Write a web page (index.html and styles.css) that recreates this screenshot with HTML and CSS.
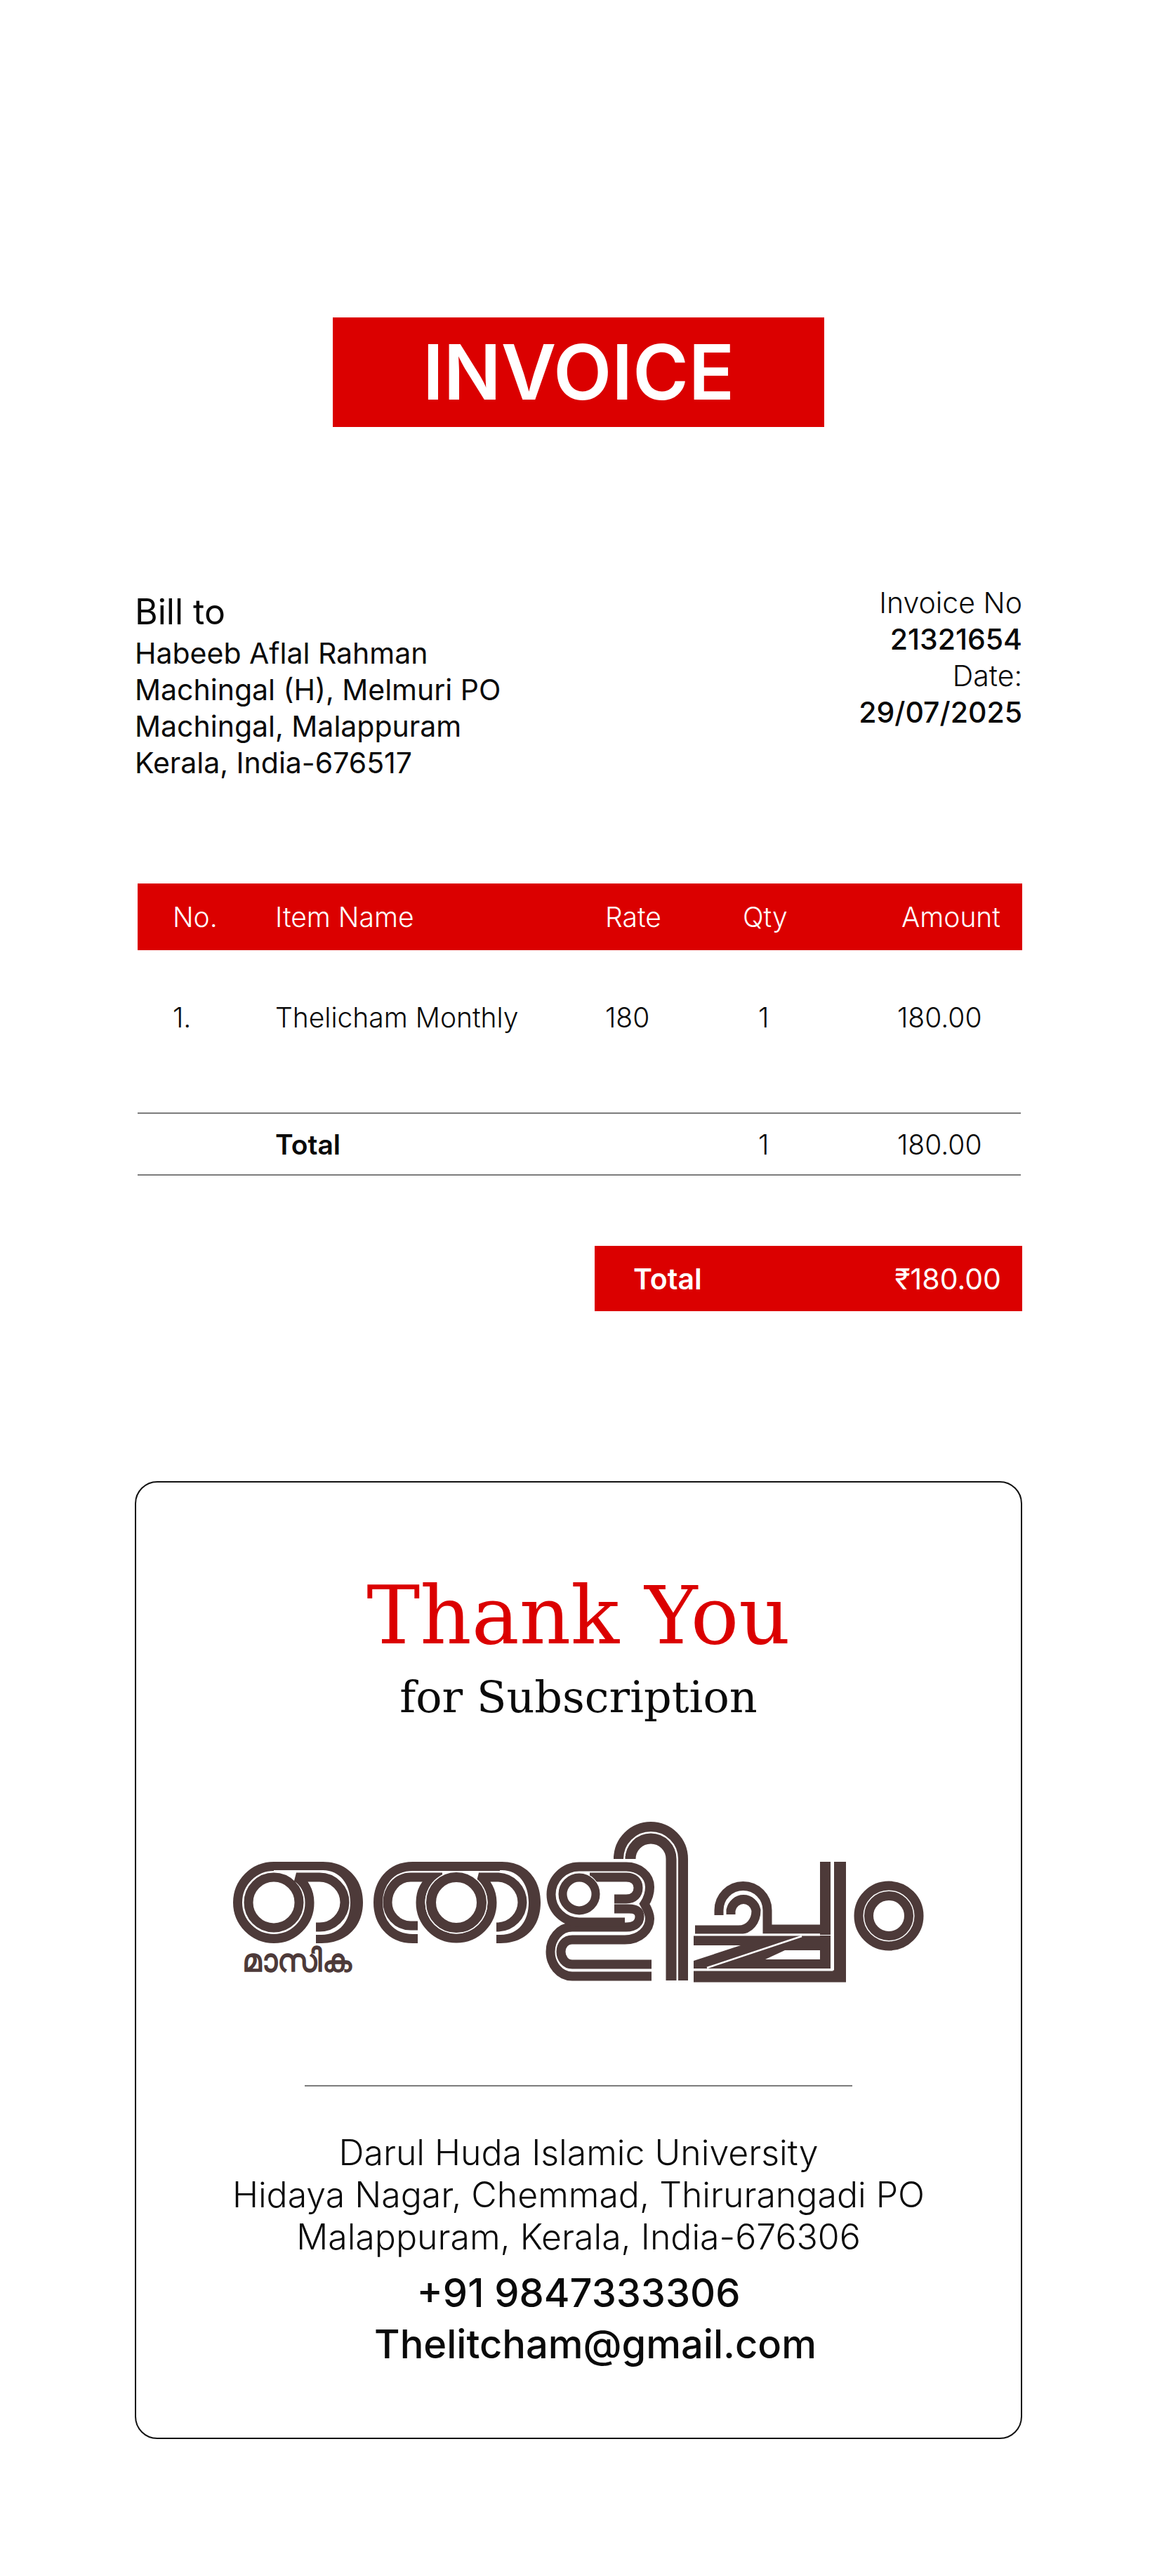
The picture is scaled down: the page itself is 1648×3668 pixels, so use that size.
FILE: index.html
```html
<!DOCTYPE html>
<html lang="en">
<head>
    <meta charset="UTF-8">
    <title>Invoice</title>
    <link rel="stylesheet" href="styles.css">
</head>
<body>
    <main class="page">
        <div class="banner">INVOICE</div>

        <section class="meta">
            <div class="bill">
                <h2>Bill to</h2>
                <p>Habeeb Aflal Rahman</p>
                <p>Machingal (H), Melmuri PO</p>
                <p>Machingal, Malappuram</p>
                <p>Kerala, India-676517</p>
            </div>
            <div class="invoice-info">
                <p>Invoice No</p>
                <p class="strong">21321654</p>
                <p>Date:</p>
                <p class="strong">29/07/2025</p>
            </div>
        </section>

        <section class="items">
            <div class="cols items-head">
                <span>No.</span>
                <span>Item Name</span>
                <span>Rate</span>
                <span>Qty</span>
                <span class="head-amount">Amount</span>
            </div>
            <div class="cols items-row">
                <span>1.</span>
                <span>Thelicham Monthly</span>
                <span>180</span>
                <span class="qty">1</span>
                <span>180.00</span>
            </div>
            <div class="cols items-total">
                <span></span>
                <b>Total</b>
                <span></span>
                <span class="qty">1</span>
                <span>180.00</span>
            </div>
        </section>

        <div class="grand-total">
            <b>Total</b>
            <span>₹180.00</span>
        </div>

        <section class="card">
            <h1>Thank You</h1>
            <p class="for-sub">for Subscription</p>

            <svg class="logo" viewBox="0 0 1060 260" width="1060" height="260">
                <g fill="none" stroke="#4d3a39" stroke-width="13">
                    <!-- first letter -->
                    <path d="M90,82.5 A51.5,51.5 0 0 0 90,185.5 A51,51 0 0 0 141,134 C141,118 133,104 122,98 H155 A36,36 0 0 1 191,134 A36,36 0 0 1 155,169 H150"/>
                    <path fill="#4d3a39" stroke="none" d="M150,192 H158 C194,192 217,168 217,134 C217,100 194,76 160,76 H90 V88 H160 C184,88 199,108 199,134 C199,160 184,180 158,180 H150 Z"/>
                    <circle cx="90" cy="134" r="36" stroke-width="13"/>

                    <!-- second letter -->
                    <path d="M295,185.5 H288 C255,185.5 238.500,160 238.500,134 C238.500,108 255,82.500 288,82.500 H412"/>
                    <path d="M295,167 H285 C265,167 252,150 252,134 C252,116 265,98 285,98 H330"/>
                    <path d="M350,185 A51,51 0 0 1 299,134 C299,118 306,106 318,98 M350,185 A51,51 0 0 0 401,134 C401,118 393,104 382,98 H410 A36,36 0 0 1 444,134 A36,36 0 0 1 410,169 H407"/>
                    <path fill="#4d3a39" stroke="none" d="M407,192 H413 C449,192 470,168 470,134 C470,100 449,76 415,76 H400 V88 H415 C439,88 453,108 453,134 C453,160 439,180 413,180 H407 Z"/>
                    <circle cx="350" cy="134" r="44.500" fill="#fff" stroke="none"/>
                    <circle cx="350" cy="134" r="36" stroke-width="14"/>

                    <!-- third letter -->
                    <path d="M628,239 H515 C497,239 484,222 484,204 C484,186 497,169 515,169 H592 C605,169 611,162 611,154 C611,146 605,143 596,143 H575"/>
                    <path d="M628,222 H515 C505,222 499,213 499,204 C499,195 505,187 515,187 H590 C612,187 625.500,172 625.500,157 C625.500,150 622,143 618,136 C622,130 625.500,122 625.500,112 C625.500,95 610,83 592,83 H525 A40,39.500 0 0 0 525,162 H590"/>
                    <path d="M575,129 H592 C603,129 609,122 609,113 C609,104 603,98 592,98 H540"/>
                    <circle cx="525" cy="122" r="30.500" fill="#fff" stroke="none"/>
                    <circle cx="525" cy="122" r="23.500" stroke-width="12"/>

                    <!-- tall stem -->
                    <path stroke-width="14" d="M581,68 V72 A46,46 0 0 1 673,72 V245"/>
                    <path stroke-width="15" d="M598,68 V72 A29,29 0 0 1 656,72 V245"/>

                    <!-- fourth letter -->
                    <path d="M724,152 V145 A34,34 0 0 1 793,145 V172 H875"/>
                    <path d="M741,151 V145 A18.500,20 0 0 1 777,145 C777,160 768,173 752,173 H690"/>
                    <path fill="#4d3a39" stroke="none" d="M688,181 H883 V228 H688 Z"/>
                    <path stroke-width="15" d="M875.500,76 V180"/>
                    <path stroke-width="17" d="M896.500,76 V239 H688"/>
                    <path stroke="#fff" stroke-width="2.500" d="M707,227 L842,182"/>
                    <path fill="#fff" stroke="none" d="M790,215 L818,202 H868 V215 Z M688,195 H755 L688,217 Z"/>
                    <path stroke="#fff" stroke-width="3" d="M688,230 H885 V78"/>
                    <path stroke="#fff" stroke-width="3" d="M688,180 H868"/>

                    <!-- last circle -->
                    <circle cx="966" cy="153" r="43" stroke-width="13"/>
                    <circle cx="966" cy="153" r="28.500" stroke-width="13"/>
                </g>
                <text class="logo-tag" x="45" y="232">മാസിക</text>
            </svg>

            <hr class="rule">

            <address class="contact">
                <p>Darul Huda Islamic University</p>
                <p>Hidaya Nagar, Chemmad, Thirurangadi PO</p>
                <p>Malappuram, Kerala, India-676306</p>
                <p class="phone">+91 9847333306</p>
                <p class="email">Thelitcham@gmail.com</p>
            </address>
        </section>
    </main>
</body>
</html>
```

FILE: styles.css
```css
* {
    margin: 0;
    padding: 0;
    box-sizing: border-box;
}

:root {
    --red: #db0000;
    --line: #7c7c7c;
    --ink: #0a0a0a;
}

body {
    background: #fff;
    color: var(--ink);
    font-family: Inter, "Liberation Sans", sans-serif;
}

.page {
    width: 1648px;
    height: 3668px;
    padding: 452px 192px 0;
    overflow: hidden;
}

.banner {
    width: 700px;
    height: 156px;
    margin: 0 auto;
    background: var(--red);
    color: #fff;
    font-size: 108px;
    font-weight: 600;
    line-height: 156px;
    text-align: center;
}

/* Bill to + invoice number */
.meta {
    display: flex;
    justify-content: space-between;
    margin-top: 224px;
    font-size: 41px;
    line-height: 52px;
}

.bill h2 {
    font-size: 50px;
    font-weight: 400;
    line-height: 66px;
    margin-top: 6px;
}

.invoice-info {
    text-align: right;
    font-weight: 300;
}

.invoice-info .strong {
    font-weight: 500;
}

/* Items table */
.items {
    margin-top: 146px;
    margin-left: 4px;
    font-size: 39px;
}

.cols {
    display: grid;
    grid-template-columns: 146px 470px 196px 220px 1fr;
    padding-left: 50px;
    align-items: center;
}

.items-head {
    height: 95px;
    background: var(--red);
    color: #fff;
    font-weight: 300;
}

.head-amount {
    padding-left: 6px;
}

.items-row {
    height: 231px;
    padding-bottom: 91px;
    padding-top: 50px;
    font-weight: 300;
}

.items-total {
    height: 90px;
    border-top: 2px solid var(--line);
    border-bottom: 2px solid var(--line);
    margin-right: 2px;
    font-weight: 300;
}

.items-total b {
    font-weight: 600;
}

.qty {
    padding-left: 22px;
}

.grand-total {
    display: flex;
    justify-content: space-between;
    align-items: center;
    width: 609px;
    height: 93px;
    margin: 100px 0 0 auto;
    padding: 0 30px 0 55px;
    background: var(--red);
    color: #fff;
    font-size: 41px;
}

.grand-total b {
    font-weight: 600;
}

/* Thank you card */
.card {
    height: 1364px;
    margin-top: 242px;
    border: 2px solid #111;
    border-radius: 32px;
    text-align: center;
    padding-top: 122px;
}

.card h1 {
    color: var(--red);
    font-family: "DejaVu Serif", serif;
    font-size: 114px;
    font-weight: 400;
    line-height: 136px;
}

.for-sub {
    font-family: "DejaVu Serif", serif;
    font-size: 62px;
    line-height: 80px;
    margin-top: 8px;
}

.logo {
    display: block;
    margin: 118px 0 0 106px;
}

.logo-tag {
    fill: #4d3a39;
    font-family: "Noto Sans", sans-serif;
    font-size: 44px;
    font-weight: 700;
}

.rule {
    width: 780px;
    margin: 134px auto 0;
    border: 0;
    border-top: 2px solid var(--line);
}

.contact {
    font-style: normal;
    font-size: 50px;
    font-weight: 300;
    line-height: 60px;
    margin-top: 64px;
}

.phone,
.email {
    font-size: 56px;
    font-weight: 500;
    line-height: 73px;
}

.phone {
    margin-top: 14px;
}

.email {
    padding-left: 48px;
}
```
